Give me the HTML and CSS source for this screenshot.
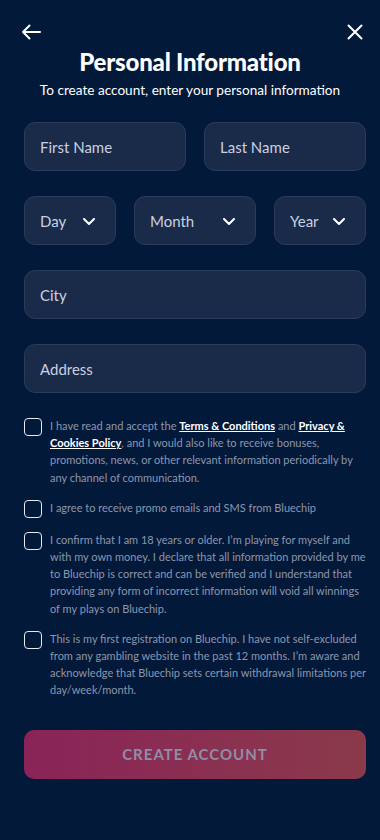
FILE: index.html
```html
<!DOCTYPE html>
<html lang="en">
<head>
<meta charset="utf-8">
<title>Personal Information</title>
<link rel="stylesheet" href="styles.css">
</head>
<body>
<div class="page">
  <header class="topbar">
    <button class="icon-btn" aria-label="Back">
      <svg width="20" height="16" viewBox="0 0 20 16"><path d="M19 8H2M8.5 1.5L2 8l6.5 6.5" fill="none" stroke="#fff" stroke-width="2" stroke-linecap="round" stroke-linejoin="round"/></svg>
    </button>
    <button class="icon-btn" aria-label="Close">
      <svg width="16" height="16" viewBox="0 0 16 16"><path d="M1.5 1.5l13 13M14.5 1.5l-13 13" fill="none" stroke="#fff" stroke-width="2" stroke-linecap="round"/></svg>
    </button>
  </header>

  <h1 class="title">Personal Information</h1>
  <p class="subtitle">To create account, enter your personal information</p>

  <form class="form">
    <div class="row two">
      <div class="field">First Name</div>
      <div class="field">Last Name</div>
    </div>
    <div class="row three">
      <div class="field select">Day <svg class="chev" width="12" height="7" viewBox="0 0 12 7"><path d="M1 1l5 5 5-5" fill="none" stroke="#fff" stroke-width="2" stroke-linecap="round" stroke-linejoin="round"/></svg></div>
      <div class="field select">Month <svg class="chev" width="12" height="7" viewBox="0 0 12 7"><path d="M1 1l5 5 5-5" fill="none" stroke="#fff" stroke-width="2" stroke-linecap="round" stroke-linejoin="round"/></svg></div>
      <div class="field select">Year <svg class="chev" width="12" height="7" viewBox="0 0 12 7"><path d="M1 1l5 5 5-5" fill="none" stroke="#fff" stroke-width="2" stroke-linecap="round" stroke-linejoin="round"/></svg></div>
    </div>
    <div class="field">City</div>
    <div class="field">Address</div>

    <div class="checks">
      <label class="check"><span class="box"></span><span class="ctext">I have read and accept the <a>Terms &amp; Conditions</a> and <a>Privacy &amp; Cookies Policy</a>, and I would also like to receive bonuses, promotions, news, or other relevant information periodically by any channel of communication.</span></label>
      <label class="check"><span class="box"></span><span class="ctext">I agree to receive promo emails and SMS from Bluechip</span></label>
      <label class="check"><span class="box"></span><span class="ctext">I confirm that I am 18 years or older. I’m playing for myself and with my own money. I declare that all information provided by me to Bluechip is correct and can be verified and I understand that providing any form of incorrect information will void all winnings of my plays on Bluechip.</span></label>
      <label class="check"><span class="box"></span><span class="ctext">This is my first registration on Bluechip. I have not self-excluded from any gambling website in the past 12 months. I’m aware and acknowledge that Bluechip sets certain withdrawal limitations per day/week/month.</span></label>
    </div>

    <button type="button" class="submit">CREATE ACCOUNT</button>
  </form>
</div>
</body>
</html>
```

FILE: styles.css
```css
* { box-sizing: border-box; }
html, body { margin: 0; padding: 0; }
body {
  background: #02193a;
  font-family: Lato, "Open Sans", sans-serif;
  color: #fff;
  width: 380px;
  height: 840px;
  overflow: hidden;
}
.page { padding: 0 14px 0 24px; }
.topbar {
  display: flex;
  justify-content: space-between;
  align-items: center;
  padding: 22px 0 0 0;
  margin-left: -4px;
  height: 42px;
}
.icon-btn {
  background: none;
  border: 0;
  padding: 0;
  width: 22px;
  height: 20px;
  display: flex;
  align-items: center;
  justify-content: center;
  cursor: pointer;
}
.title {
  margin: 5px 10px 0 0;
  text-align: center;
  font-size: 24px;
  font-weight: 900;
  line-height: 30px;
  letter-spacing: -0.2px;
}
.subtitle {
  margin: 4px 10px 0 0;
  text-align: center;
  font-size: 13.6px;
  line-height: 18px;
  color: #fff;
}
.form {
  margin: 23px 0 0 0;
  width: 342px;
  display: flex;
  flex-direction: column;
  gap: 25px;
}
.row { display: grid; gap: 18px; }
.row.two { grid-template-columns: 1fr 1fr; }
.row.three { grid-template-columns: 92px 122px 92px; }
.field {
  height: 49px;
  background: #1a2a49;
  border: 1px solid #2b3b5b;
  border-radius: 11px;
  display: flex;
  align-items: center;
  padding: 0 15px;
  font-size: 15px;
  color: #c9d1e0;
}
.field.select { justify-content: space-between; padding-right: 20px; }
.chev { flex: none; margin-top: 2px; }
.checks {
  display: flex;
  flex-direction: column;
  gap: 14px;
}
.check {
  display: flex;
  gap: 8px;
  align-items: flex-start;
}
.box {
  flex: none;
  width: 18px;
  height: 18px;
  border: 1.5px solid #e6eaf2;
  border-radius: 4px;
}
.ctext {
  font-size: 11px;
  line-height: 17.2px;
  color: #8c96ad;
  margin-top: -1px;
}
.ctext a {
  color: #fff;
  font-weight: 700;
  text-decoration: underline;
}
.submit {
  margin-top: 6px;
  height: 49px;
  border: 0;
  border-radius: 10px;
  background: linear-gradient(90deg, #8a2458 0%, #8a3a4b 100%);
  color: #8e8ea6;
  font-family: inherit;
  font-size: 15px;
  font-weight: 700;
  letter-spacing: 1px;
}
```
